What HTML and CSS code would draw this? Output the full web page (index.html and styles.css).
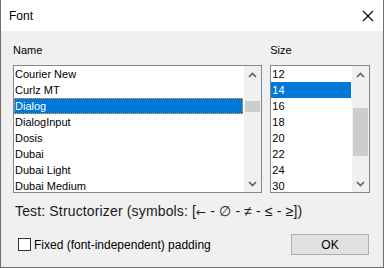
FILE: index.html
```html
<!DOCTYPE html>
<html lang="en">
<head>
  <meta charset="UTF-8" />
  <title>Font</title>
  <link rel="stylesheet" href="styles.css">
</head>
<body>
  <div class="window">
    <div class="titlebar">
      <span class="title">Font</span>
      <svg class="close" width="12" height="12" viewBox="0 0 12 12">
        <path d="M1 1 L11 11 M11 1 L1 11" stroke="#000" stroke-width="1.1" fill="none" />
      </svg>
    </div>
    <div class="content">
      <div class="panes">
        <div class="pane name-pane">
          <div class="label">Name</div>
          <div class="listbox">
            <ul class="items">
              <li>Courier New</li>
              <li>Curlz MT</li>
              <li class="selected focused">Dialog</li>
              <li>DialogInput</li>
              <li>Dosis</li>
              <li>Dubai</li>
              <li>Dubai Light</li>
              <li>Dubai Medium</li>
            </ul>
            <div class="scrollbar">
              <div class="arrow up"><svg width="9" height="6" viewBox="0 0 9 6"><path d="M1 5 L4.5 1.5 L8 5" stroke="#606060" stroke-width="1.6" fill="none" /></svg></div>
              <div class="track"><div class="thumb name-thumb"></div></div>
              <div class="arrow down"><svg width="9" height="6" viewBox="0 0 9 6"><path d="M1 1 L4.5 4.5 L8 1" stroke="#606060" stroke-width="1.6" fill="none" /></svg></div>
            </div>
          </div>
        </div>
        <div class="pane size-pane">
          <div class="label">Size</div>
          <div class="listbox">
            <ul class="items">
              <li>12</li>
              <li class="selected">14</li>
              <li>16</li>
              <li>18</li>
              <li>20</li>
              <li>22</li>
              <li>24</li>
              <li>30</li>
            </ul>
            <div class="scrollbar">
              <div class="arrow up"><svg width="9" height="6" viewBox="0 0 9 6"><path d="M1 5 L4.5 1.5 L8 5" stroke="#606060" stroke-width="1.6" fill="none" /></svg></div>
              <div class="track"><div class="thumb size-thumb"></div></div>
              <div class="arrow down"><svg width="9" height="6" viewBox="0 0 9 6"><path d="M1 1 L4.5 4.5 L8 1" stroke="#606060" stroke-width="1.6" fill="none" /></svg></div>
            </div>
          </div>
        </div>
      </div>

      <div class="test">Test: Structorizer (symbols: [<span class="sym">←</span> - ∅ - ≠ - ≤ - ≥])</div>

      <div class="bottom">
        <label class="check">
          <span class="box"></span>
          <span>Fixed (font-independent) padding</span>
        </label>
        <button class="ok">OK</button>
      </div>
    </div>
  </div>
</body>
</html>
```

FILE: styles.css
```css
body {
  margin: 0;
  font-family: "Liberation Sans", Arial, sans-serif;
  background-color: #f0f0f0;
}
.window {
  width: 384px;
  height: 268px;
  box-sizing: border-box;
  border: 1px solid #6e6e6e;
  border-top: none;
  background-color: #f0f0f0;
  display: flex;
  flex-direction: column;
}
.titlebar {
  height: 31px;
  background-color: #fff;
  display: flex;
  align-items: center;
  justify-content: space-between;
  padding: 0 9px 0 8px;
}
.title {
  font-size: 12px;
  color: #000;
}
.close {
  display: block;
  margin-top: 1px;
}
.content {
  padding: 11px 13px 0 12px;
}
.panes {
  display: flex;
  gap: 8px;
}
.name-pane {
  width: 250px;
}
.size-pane {
  width: 100px;
}
.label {
  font-size: 11px;
  line-height: 16px;
  margin-bottom: 7px;
  color: #000;
}
.listbox {
  height: 128px;
  box-sizing: border-box;
  border: 1px solid #828790;
  background-color: #fff;
  display: flex;
}
.items {
  list-style: none;
  margin: 0;
  padding: 0;
  flex: 1;
  overflow: hidden;
}
.items li {
  height: 16px;
  line-height: 16px;
  font-size: 11px;
  padding-left: 1px;
  color: #000;
  box-sizing: border-box;
  white-space: nowrap;
}
.items li.selected {
  background-color: #0078d7;
  color: #fff;
  margin-right: 1px;
}
.items li.focused {
  border: 1px dotted #ff9a2e;
  line-height: 14px;
  padding-left: 0;
}
.scrollbar {
  width: 17px;
  background-color: #f0f0f0;
  display: flex;
  flex-direction: column;
}
.arrow {
  height: 17px;
  display: flex;
  align-items: center;
  justify-content: center;
}
.arrow svg {
  display: block;
}
.track {
  flex: 1;
  padding: 0 1px;
}
.thumb {
  background-color: #cdcdcd;
}
.name-thumb {
  margin-top: 18px;
  height: 11px;
}
.size-thumb {
  margin-top: 25px;
  height: 48px;
}
.test {
  font-size: 14px;
  line-height: 20px;
  margin-top: 8px;
  padding-left: 2px;
  letter-spacing: 0.15px;
  color: #1a1a1a;
}
.sym {
  font-family: "DejaVu Sans", sans-serif;
  font-size: 12px;
}
.bottom {
  margin-top: 12px;
  display: flex;
  justify-content: space-between;
  align-items: center;
}
.check {
  display: flex;
  align-items: center;
  gap: 3px;
  padding-left: 5px;
  font-size: 12px;
  color: #000;
}
.box {
  width: 13px;
  height: 13px;
  box-sizing: border-box;
  border: 1px solid #333;
  background-color: #fff;
}
.ok {
  width: 78px;
  height: 21px;
  margin-right: 1px;
  border: 1px solid #adadad;
  background-color: #e1e1e1;
  font-family: "Liberation Sans", Arial, sans-serif;
  font-size: 12px;
  color: #000;
  padding: 0;
}
```
